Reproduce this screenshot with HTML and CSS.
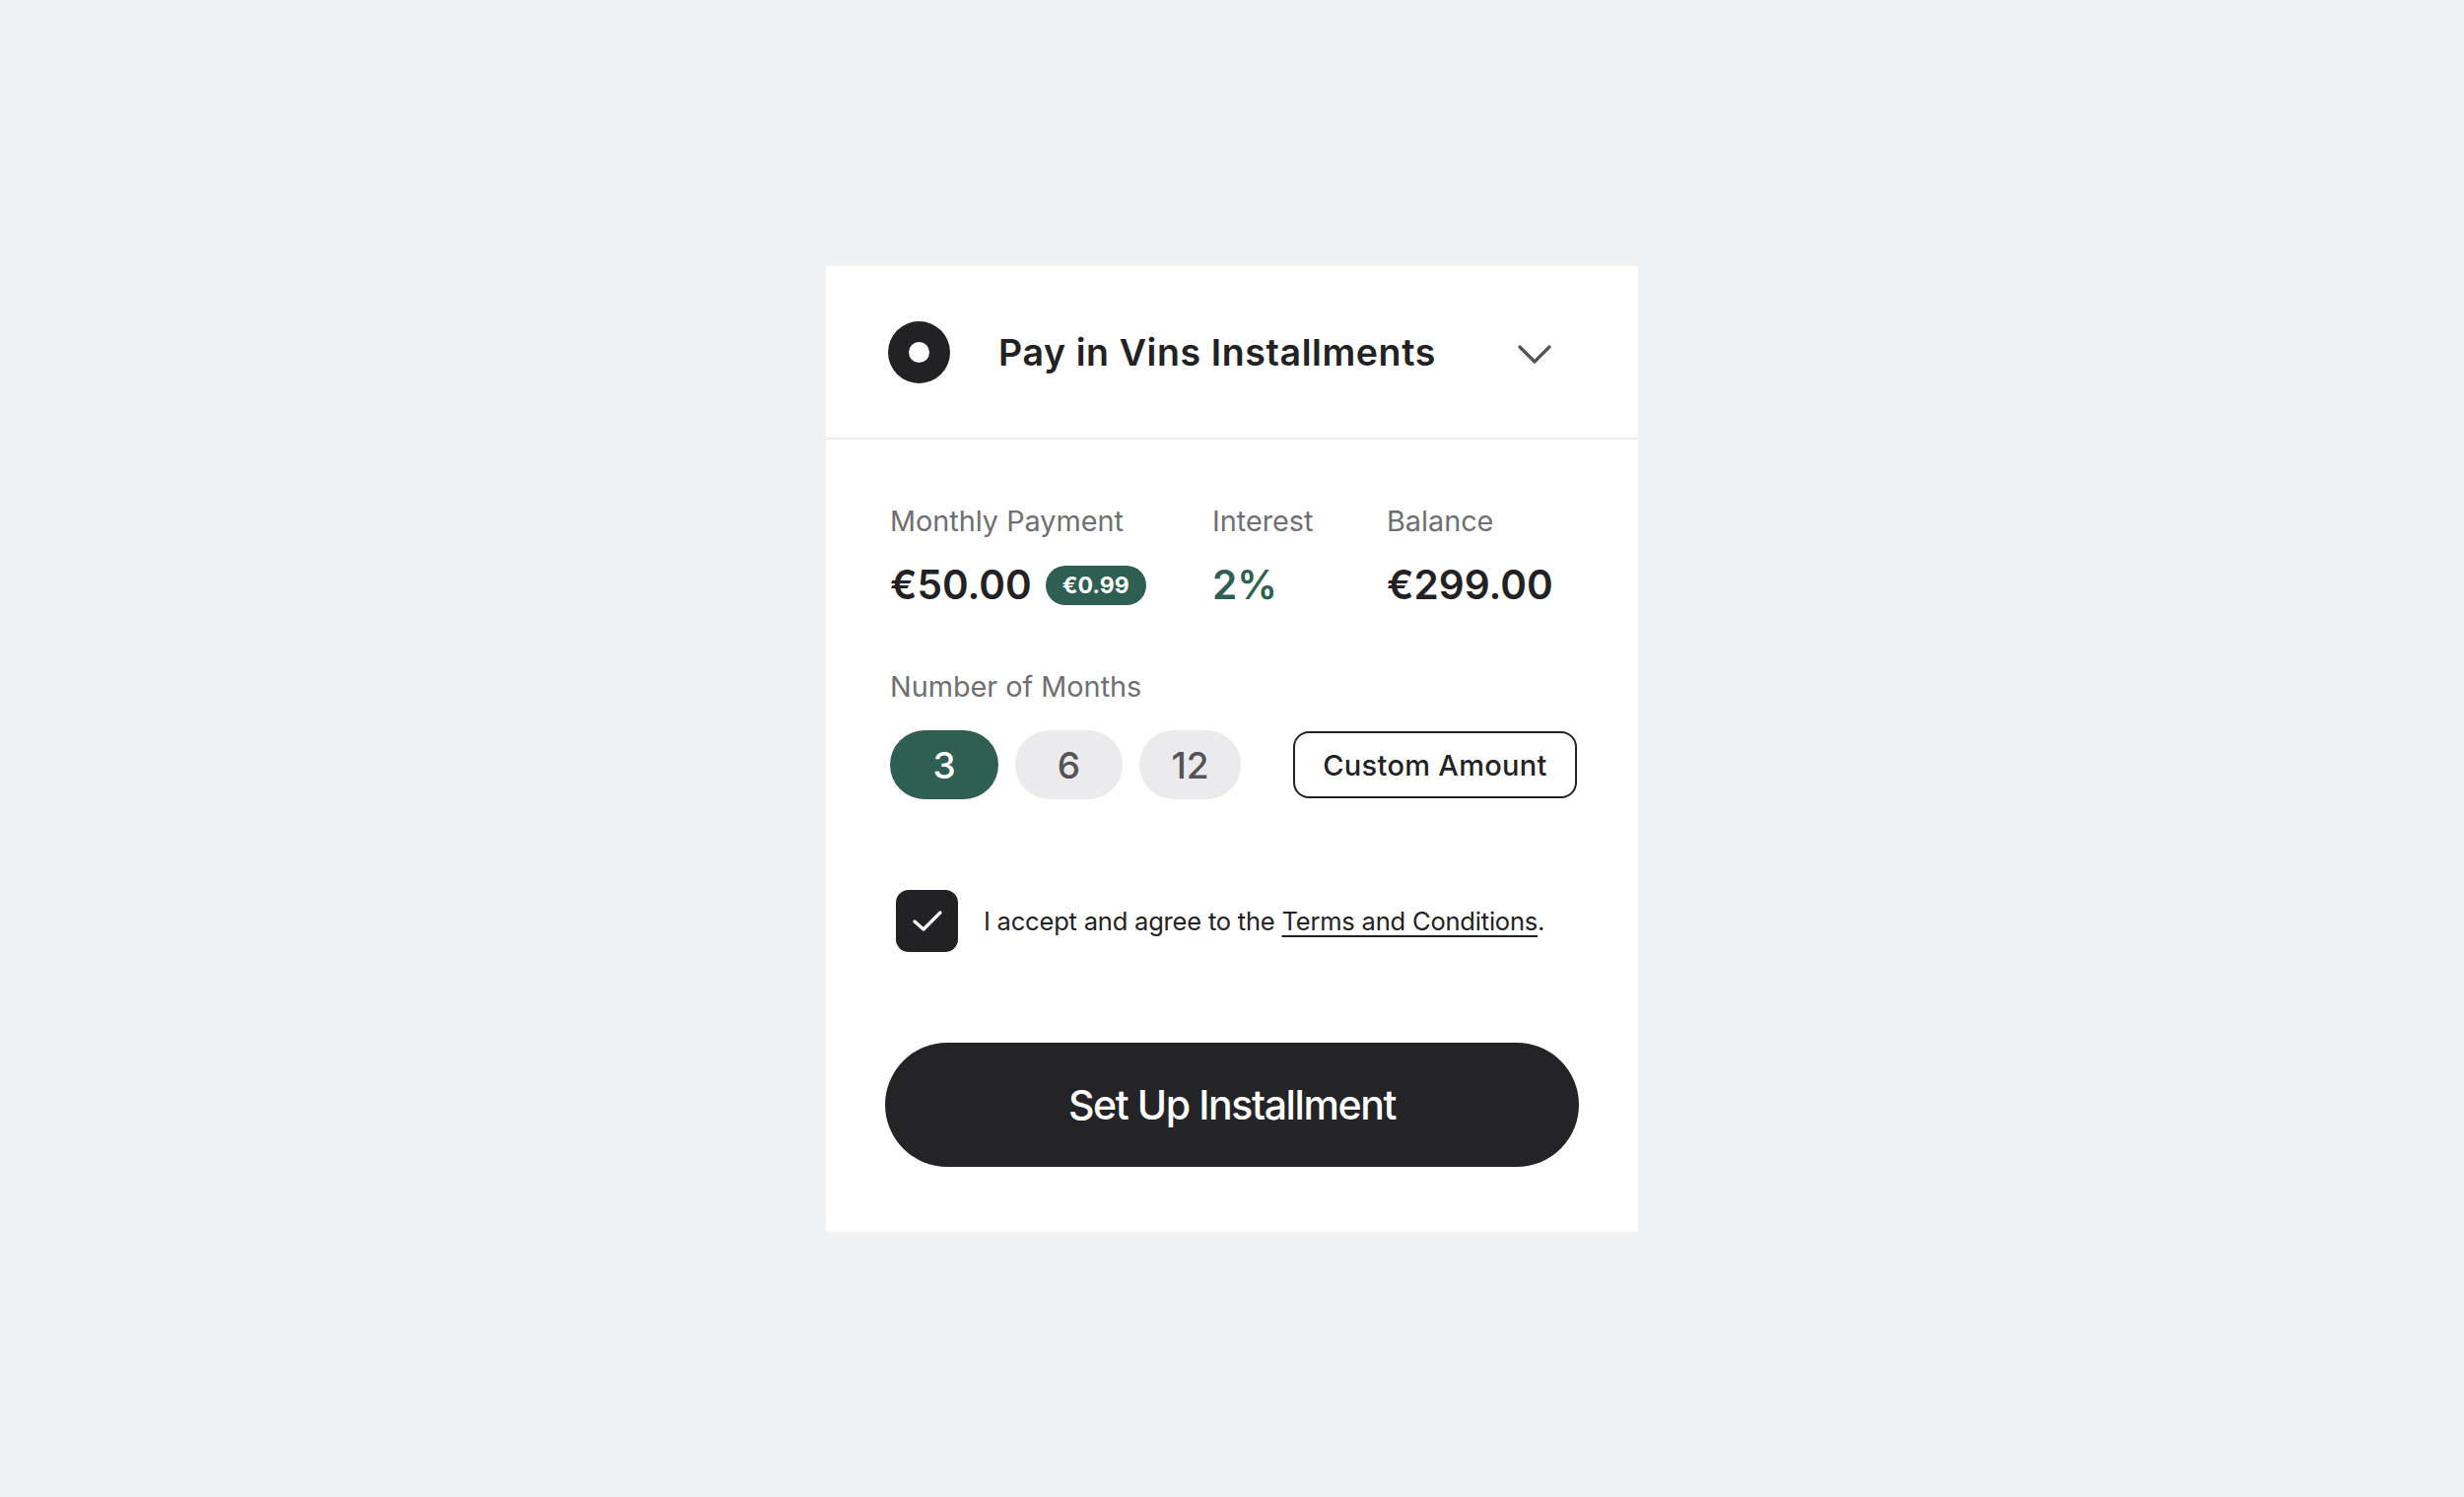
FILE: index.html
```html
<!DOCTYPE html>
<html lang="en">
<head>
  <meta charset="UTF-8">
  <meta name="viewport" content="width=device-width, initial-scale=1.0">
  <title>Pay in Vins Installments</title>
  <link rel="stylesheet" href="styles.css">
</head>
<body>
  <div class="card">
    <div class="card-header">
      <span class="radio"></span>
      <h2 class="title">Pay in Vins Installments</h2>
      <svg class="chevron" width="34" height="20" viewBox="0 0 34 20">
        <path d="M2 2 L17 17 L32 2" fill="none" stroke="#555" stroke-width="3.2" stroke-linecap="round" stroke-linejoin="round"/>
      </svg>
    </div>

    <div class="card-body">
      <div class="stats">
        <div class="stat">
          <div class="label">Monthly Payment</div>
          <div class="value">€50.00 <span class="badge">€0.99</span></div>
        </div>
        <div class="stat">
          <div class="label">Interest</div>
          <div class="value green">2%</div>
        </div>
        <div class="stat">
          <div class="label">Balance</div>
          <div class="value">€299.00</div>
        </div>
      </div>

      <div class="months">
        <div class="label">Number of Months</div>
        <div class="month-options">
          <button class="pill active w3">3</button>
          <button class="pill w6">6</button>
          <button class="pill w12">12</button>
          <button class="custom">Custom Amount</button>
        </div>
      </div>

      <label class="agree">
        <span class="checkbox">
          <svg width="34" height="26" viewBox="0 0 34 26">
            <path d="M4 13 L13 21 L30 4" fill="none" stroke="#fff" stroke-width="3.2" stroke-linecap="round" stroke-linejoin="round"/>
          </svg>
        </span>
        <span class="agree-text">I accept and agree to the <a href="#">Terms and Conditions</a>.</span>
      </label>

      <button class="submit">Set Up Installment</button>
    </div>
  </div>
</body>
</html>
```

FILE: styles.css
```css
body {
  margin: 0;
  padding: 0;
  background: #f0f1f3;
  font-family: Inter, "Noto Sans", sans-serif;
  color: #222224;
}
.card {
  width: 824px;
  margin: 270px auto 0;
  background: #fff;
}
.card-header {
  display: flex;
  align-items: center;
  height: 174px;
  padding: 0 88px 0 63px;
  border-bottom: 2px solid #ececee;
}
.radio {
  width: 63px;
  height: 63px;
  border-radius: 50%;
  background: #222224;
  display: flex;
  align-items: center;
  justify-content: center;
  flex-shrink: 0;
}
.radio::after {
  content: "";
  width: 21px;
  height: 21px;
  border-radius: 50%;
  background: #fff;
}
.title {
  flex: 1;
  margin: 0 0 0 49px;
  font-size: 37.5px;
  font-weight: 600;
  letter-spacing: 0.6px;
}
.chevron {
  display: block;
  margin-top: 5px;
}
.card-body {
  padding: 66px 60px 66px;
}
.stats {
  display: grid;
  grid-template-columns: 327px 177px auto;
  padding-left: 5px;
}
.label {
  font-size: 28.8px;
  line-height: 34px;
  color: #6f6f72;
}
.value {
  margin-top: 24px;
  font-size: 40.5px;
  line-height: 48px;
  font-weight: 600;
  display: flex;
  align-items: center;
}
.value.green {
  color: #2f5e52;
}
.badge {
  margin-left: 14px;
  height: 40px;
  padding: 0 17px;
  border-radius: 20px;
  background: #2f5e52;
  color: #fff;
  font-size: 23px;
  font-weight: 700;
  line-height: 40px;
}
.months {
  margin-top: 62px;
  padding-left: 5px;
}
.months .label {
  padding-left: 0;
}
.month-options {
  display: flex;
  align-items: center;
  margin-top: 27px;
}
.pill {
  height: 70px;
  border: none;
  border-radius: 35px;
  background: #ebebed;
  color: #545456;
  font-family: inherit;
  font-size: 37px;
  font-weight: 500;
  margin-right: 17px;
  padding: 0;
}
.pill.active {
  background: #2f5e52;
  color: #fff;
}
.w3 { width: 110px; }
.w6 { width: 109px; }
.w12 { width: 103px; margin-right: 53px; }
.custom {
  width: 288px;
  height: 68px;
  border: 2px solid #222224;
  border-radius: 16px;
  background: #fff;
  color: #222224;
  font-family: inherit;
  font-size: 29px;
  font-weight: 500;
  letter-spacing: 0.3px;
}
.agree {
  display: flex;
  align-items: center;
  margin-top: 92px;
  padding-left: 11px;
}
.checkbox {
  width: 63px;
  height: 63px;
  border-radius: 13px;
  background: #222224;
  display: flex;
  align-items: center;
  justify-content: center;
  flex-shrink: 0;
}
.agree-text {
  margin-left: 26px;
  font-size: 25.5px;
  letter-spacing: -0.2px;
  color: #222224;
}
.agree-text a {
  color: inherit;
  text-decoration: underline;
  text-underline-offset: 5px;
  text-decoration-thickness: 2px;
}
.submit {
  display: block;
  width: 100%;
  height: 126px;
  margin-top: 92px;
  border: none;
  border-radius: 63px;
  background: #242426;
  color: #fff;
  font-family: inherit;
  font-size: 41px;
  font-weight: 500;
  letter-spacing: -1.4px;
}
```
